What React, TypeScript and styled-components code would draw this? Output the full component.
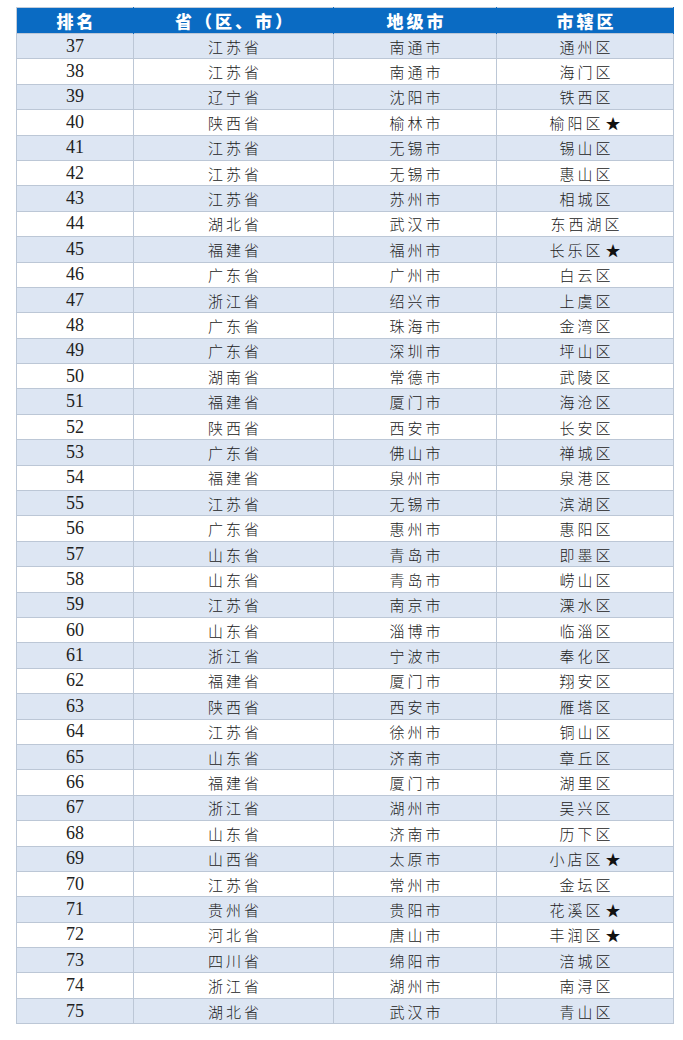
// 城市区排名 표 (37 ~ 75)

import styled, { createGlobalStyle } from "styled-components";

const GlobalStyle = createGlobalStyle`
  html, body {
    margin: 0;
    padding: 0;
    background: #ffffff;
  }
`;

const Page = styled.div`
  padding: 7px 10px 0 16px;
`;

const Table = styled.table`
  width: 657px;
  border-collapse: collapse;
  table-layout: fixed;
  border: 1px solid #c3ccd9;
`;

const HeadCell = styled.th`
  height: 25px;
  padding: 0 0 0 3px;
  background: #0a6bc3;
  color: #ffffff;
  font-family: "Noto Sans CJK SC", sans-serif;
  font-weight: 900;
  font-size: 17px;
  letter-spacing: 3px;
  line-height: 24px;
  text-align: center;
  border-right: 1px solid #0a6bc3;
`;

// 줄마다 배경색이 바뀜 (파랑 / 흰색)
const Row = styled.tr<{ $shade: boolean }>`
  height: 25.4px;
  background: ${(p) => (p.$shade ? "#dde6f3" : "#ffffff")};
`;

const Cell = styled.td<{ $num?: boolean }>`
  padding: 0 0 0 ${(p) => (p.$num ? "0" : "3px")};
  border: 1px solid #bcc7d6;
  color: #222222;
  text-align: center;
  line-height: 23px;
  white-space: nowrap;
  font-family: ${(p) =>
    p.$num
      ? '"Liberation Serif", serif'
      : '"Noto Sans CJK SC", sans-serif'};
  font-size: ${(p) => (p.$num ? "18px" : "15px")};
  font-weight: ${(p) => (p.$num ? 400 : 300)};
  letter-spacing: ${(p) => (p.$num ? "0" : "3px")};
`;

const Star = styled.span`
  color: #111111;
  margin-left: 2px;
`;

const rows: [number, string, string, string, boolean?][] = [
  [37, "江苏省", "南通市", "通州区"],
  [38, "江苏省", "南通市", "海门区"],
  [39, "辽宁省", "沈阳市", "铁西区"],
  [40, "陕西省", "榆林市", "榆阳区", true],
  [41, "江苏省", "无锡市", "锡山区"],
  [42, "江苏省", "无锡市", "惠山区"],
  [43, "江苏省", "苏州市", "相城区"],
  [44, "湖北省", "武汉市", "东西湖区"],
  [45, "福建省", "福州市", "长乐区", true],
  [46, "广东省", "广州市", "白云区"],
  [47, "浙江省", "绍兴市", "上虞区"],
  [48, "广东省", "珠海市", "金湾区"],
  [49, "广东省", "深圳市", "坪山区"],
  [50, "湖南省", "常德市", "武陵区"],
  [51, "福建省", "厦门市", "海沧区"],
  [52, "陕西省", "西安市", "长安区"],
  [53, "广东省", "佛山市", "禅城区"],
  [54, "福建省", "泉州市", "泉港区"],
  [55, "江苏省", "无锡市", "滨湖区"],
  [56, "广东省", "惠州市", "惠阳区"],
  [57, "山东省", "青岛市", "即墨区"],
  [58, "山东省", "青岛市", "崂山区"],
  [59, "江苏省", "南京市", "溧水区"],
  [60, "山东省", "淄博市", "临淄区"],
  [61, "浙江省", "宁波市", "奉化区"],
  [62, "福建省", "厦门市", "翔安区"],
  [63, "陕西省", "西安市", "雁塔区"],
  [64, "江苏省", "徐州市", "铜山区"],
  [65, "山东省", "济南市", "章丘区"],
  [66, "福建省", "厦门市", "湖里区"],
  [67, "浙江省", "湖州市", "吴兴区"],
  [68, "山东省", "济南市", "历下区"],
  [69, "山西省", "太原市", "小店区", true],
  [70, "江苏省", "常州市", "金坛区"],
  [71, "贵州省", "贵阳市", "花溪区", true],
  [72, "河北省", "唐山市", "丰润区", true],
  [73, "四川省", "绵阳市", "涪城区"],
  [74, "浙江省", "湖州市", "南浔区"],
  [75, "湖北省", "武汉市", "青山区"],
];

export default function App() {
  return (
    <Page>
      <GlobalStyle />
      <Table>
        <colgroup>
          <col style={{ width: 117 }} />
          <col style={{ width: 200 }} />
          <col style={{ width: 163 }} />
          <col style={{ width: 177 }} />
        </colgroup>
        <thead>
          <tr>
            <HeadCell>排名</HeadCell>
            <HeadCell>省（区、市）</HeadCell>
            <HeadCell>地级市</HeadCell>
            <HeadCell>市辖区</HeadCell>
          </tr>
        </thead>
        <tbody>
          {rows.map(([rank, prov, city, district, star], i) => (
            <Row key={rank} $shade={i % 2 === 0}>
              <Cell $num>{rank}</Cell>
              <Cell>{prov}</Cell>
              <Cell>{city}</Cell>
              <Cell>
                {district}
                {star && <Star>★</Star>}
              </Cell>
            </Row>
          ))}
        </tbody>
      </Table>
    </Page>
  );
}
